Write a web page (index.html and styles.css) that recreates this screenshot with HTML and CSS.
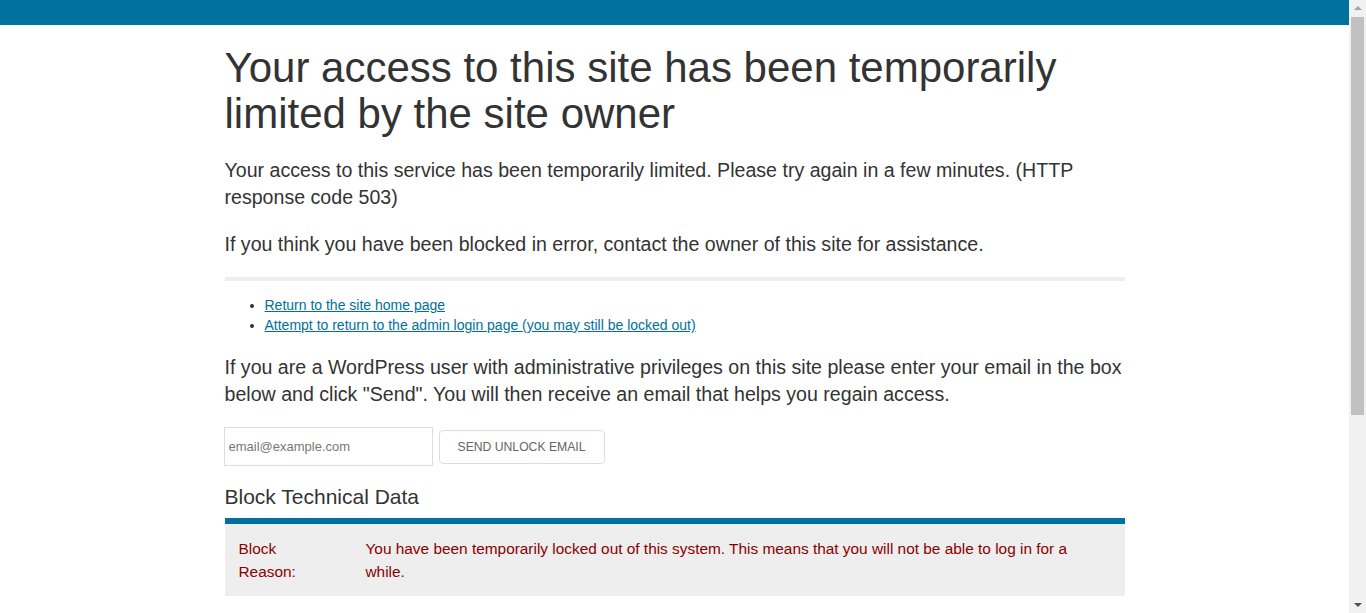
FILE: index.html
```html
<!DOCTYPE html>
<html lang="en">
<head>
<meta charset="utf-8">
<title>Your access to this site has been limited by the site owner</title>
<link rel="stylesheet" href="styles.css">
</head>
<body>
<div class="topbar"></div>
<main class="container">
  <h1 class="title">Your access to this site has been temporarily limited by the site owner</h1>
  <p class="lead">Your access to this service has been temporarily limited. Please try again in a few minutes. (HTTP response code 503)</p>
  <p class="lead">If you think you have been blocked in error, contact the owner of this site for assistance.</p>
  <hr class="divider">
  <ul class="links">
    <li><a href="#">Return to the site home page</a></li>
    <li><a href="#">Attempt to return to the admin login page (you may still be locked out)</a></li>
  </ul>
  <p class="lead">If you are a WordPress user with administrative privileges on this site please enter your email in the box below and click "Send". You will then receive an email that helps you regain access.</p>
  <form class="unlock">
    <input class="email" type="text" placeholder="email@example.com">
    <button class="send" type="button">Send Unlock Email</button>
  </form>
  <h2 class="subtitle">Block Technical Data</h2>
  <table class="data">
    <tr><th>Block Reason:</th><td>You have been temporarily locked out of this system. This means that you will not be able to log in for a while.</td></tr>
  </table>
</main>
<div class="scrollbar" aria-hidden="true">
  <span class="arrow up"></span>
  <span class="thumb"></span>
  <span class="arrow down"></span>
</div>
</body>
</html>
```

FILE: styles.css
```css
html, body {
  margin: 0;
  padding: 0;
}
body {
  font-family: "Liberation Sans", Arial, Helvetica, sans-serif;
  color: #333;
  background: #fff;
  margin-right: 17px;
  height: 613px;
  overflow: hidden;
}
.topbar {
  height: 25px;
  background: #00709e;
}
.container {
  width: 900px;
  margin: 0 auto;
}
.title {
  font-size: 42px;
  line-height: 46px;
  font-weight: normal;
  margin: 20px 0 0;
}
.lead {
  font-size: 19.6px;
  line-height: 27px;
  margin: 20px 0 0;
}
.divider {
  border: 0;
  height: 4px;
  background: #eee;
  margin: 19px 0 0;
}
.links {
  margin: 14px 0 0;
  padding-left: 40px;
  font-size: 14px;
  line-height: 20px;
}
.links a {
  color: #00709e;
}
.links + .lead {
  margin-top: 19px;
}
.unlock {
  display: flex;
  align-items: center;
  gap: 6px;
  margin-top: 19px;
}
.email {
  width: 209px;
  height: 39px;
  box-sizing: border-box;
  border: 1px solid #ddd;
  padding: 0 4px;
  font-family: inherit;
  font-size: 13px;
  margin-left: -1px;
}
.email::placeholder {
  color: #777;
}
.send {
  height: 34px;
  width: 166px;
  box-sizing: border-box;
  background: #fff;
  border: 1px solid #ddd;
  border-radius: 4px;
  font-family: inherit;
  font-size: 12.2px;
  text-transform: uppercase;
  color: #666;
}
.subtitle {
  font-size: 21px;
  font-weight: normal;
  margin: 19px 0 0;
  line-height: 24px;
}
.data {
  width: 100%;
  border-collapse: collapse;
  border-top: 6px solid #00709e;
  background: #eee;
  margin-top: 9px;
  color: #8b0000;
  font-size: 15.4px;
  line-height: 23px;
}
.data th {
  text-align: left;
  font-weight: normal;
  width: 80px;
  padding: 13px 47px 13px 14px;
  vertical-align: top;
}
.data td {
  padding: 13px 40px 13px 0;
  vertical-align: top;
}
.scrollbar {
  position: fixed;
  top: 0;
  right: 0;
  width: 17px;
  height: 100%;
  background: #f1f1f1;
  display: flex;
  flex-direction: column;
  align-items: center;
}
.arrow {
  width: 0;
  height: 0;
  border-left: 4px solid transparent;
  border-right: 4px solid transparent;
}
.arrow.up {
  margin-top: 6px;
  border-bottom: 4px solid #a3a3a3;
}
.arrow.down {
  margin-top: auto;
  margin-bottom: 6px;
  border-top: 4px solid #505050;
}
.thumb {
  width: 13px;
  height: 398px;
  margin-top: 7px;
  background: #c1c1c1;
}
```
